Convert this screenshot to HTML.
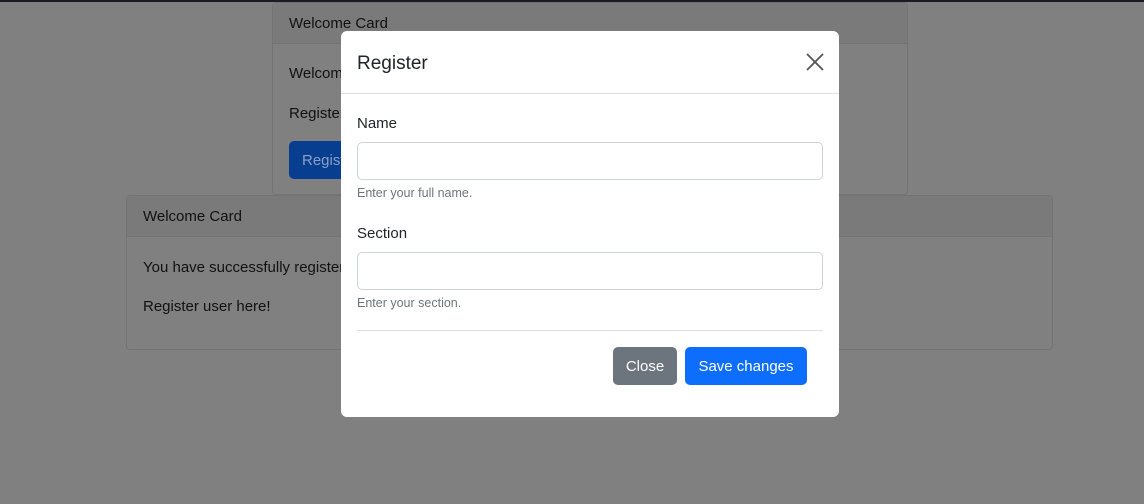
<!DOCTYPE html>
<html><head><style>
*{box-sizing:border-box;margin:0;padding:0}
body{width:1144px;height:504px;background:#808080;font-family:"Liberation Sans",sans-serif;color:#111;position:relative;overflow:hidden;font-size:15px}
.a{position:absolute}
.card{position:absolute;border:1px solid #737373;border-radius:4px;background:#808080}
.ch{position:absolute;left:0;right:0;top:0;height:41px;background:#7a7a7a;border-bottom:1px solid #737373;padding:12px 16px;line-height:18px}
.t{position:absolute;white-space:nowrap;line-height:18px}
.modal{position:absolute;left:341px;top:31px;width:498px;height:386px;background:#fff;border-radius:6px;color:#212529}
.inp{position:absolute;left:16px;width:466px;height:38px;border:1px solid #ced4da;border-radius:5px}
.help{position:absolute;left:16px;font-size:12.5px;color:#6c757d}
.btn{position:absolute;top:316px;height:38px;border-radius:5px;color:#fff;text-align:center;line-height:40px;font-size:15px}
</style></head><body>
<div class="a" style="left:0;top:0;width:1144px;height:2px;background:#1a1b26"></div>
<div class="card" style="left:272px;top:2px;width:636px;height:193px">
<div class="ch">Welcome Card</div>
<div class="t" style="left:16px;top:62px">Welcome</div>
<div class="t" style="left:16px;top:102px">Register user here!</div>
<div class="a" style="left:16px;top:138px;width:100px;height:38px;background:#073e8f;border-radius:5px;color:#8aa0c4;line-height:40px;padding-left:13px">Register</div>
</div>
<div class="card" style="left:126px;top:195px;width:927px;height:155px">
<div class="ch">Welcome Card</div>
<div class="t" style="left:16px;top:63px">You have successfully registered</div>
<div class="t" style="left:16px;top:102px">Register user here!</div>
</div>
<div class="modal">
<div class="t" style="left:16px;top:22px;font-size:19px;line-height:22px">Register</div>
<svg class="a" style="left:465px;top:22px" width="18" height="18" viewBox="0 0 18 18"><path d="M1 1L17 17M17 1L1 17" stroke="#555" stroke-width="1.8"/></svg>
<div class="a" style="left:0;right:0;top:62px;border-top:1px solid #dee2e6"></div>
<div class="t" style="left:16px;top:84px">Name</div>
<div class="inp" style="top:111px"></div>
<div class="help" style="top:155px">Enter your full name.</div>
<div class="t" style="left:16px;top:194px">Section</div>
<div class="inp" style="top:221px"></div>
<div class="help" style="top:265px">Enter your section.</div>
<div class="a" style="left:16px;right:16px;top:299px;border-top:1px solid #dee2e6"></div>
<div class="btn" style="left:272px;width:64px;background:#6c757d">Close</div>
<div class="btn" style="left:344px;width:122px;background:#0d6efd">Save changes</div>
</div>
</body></html>
